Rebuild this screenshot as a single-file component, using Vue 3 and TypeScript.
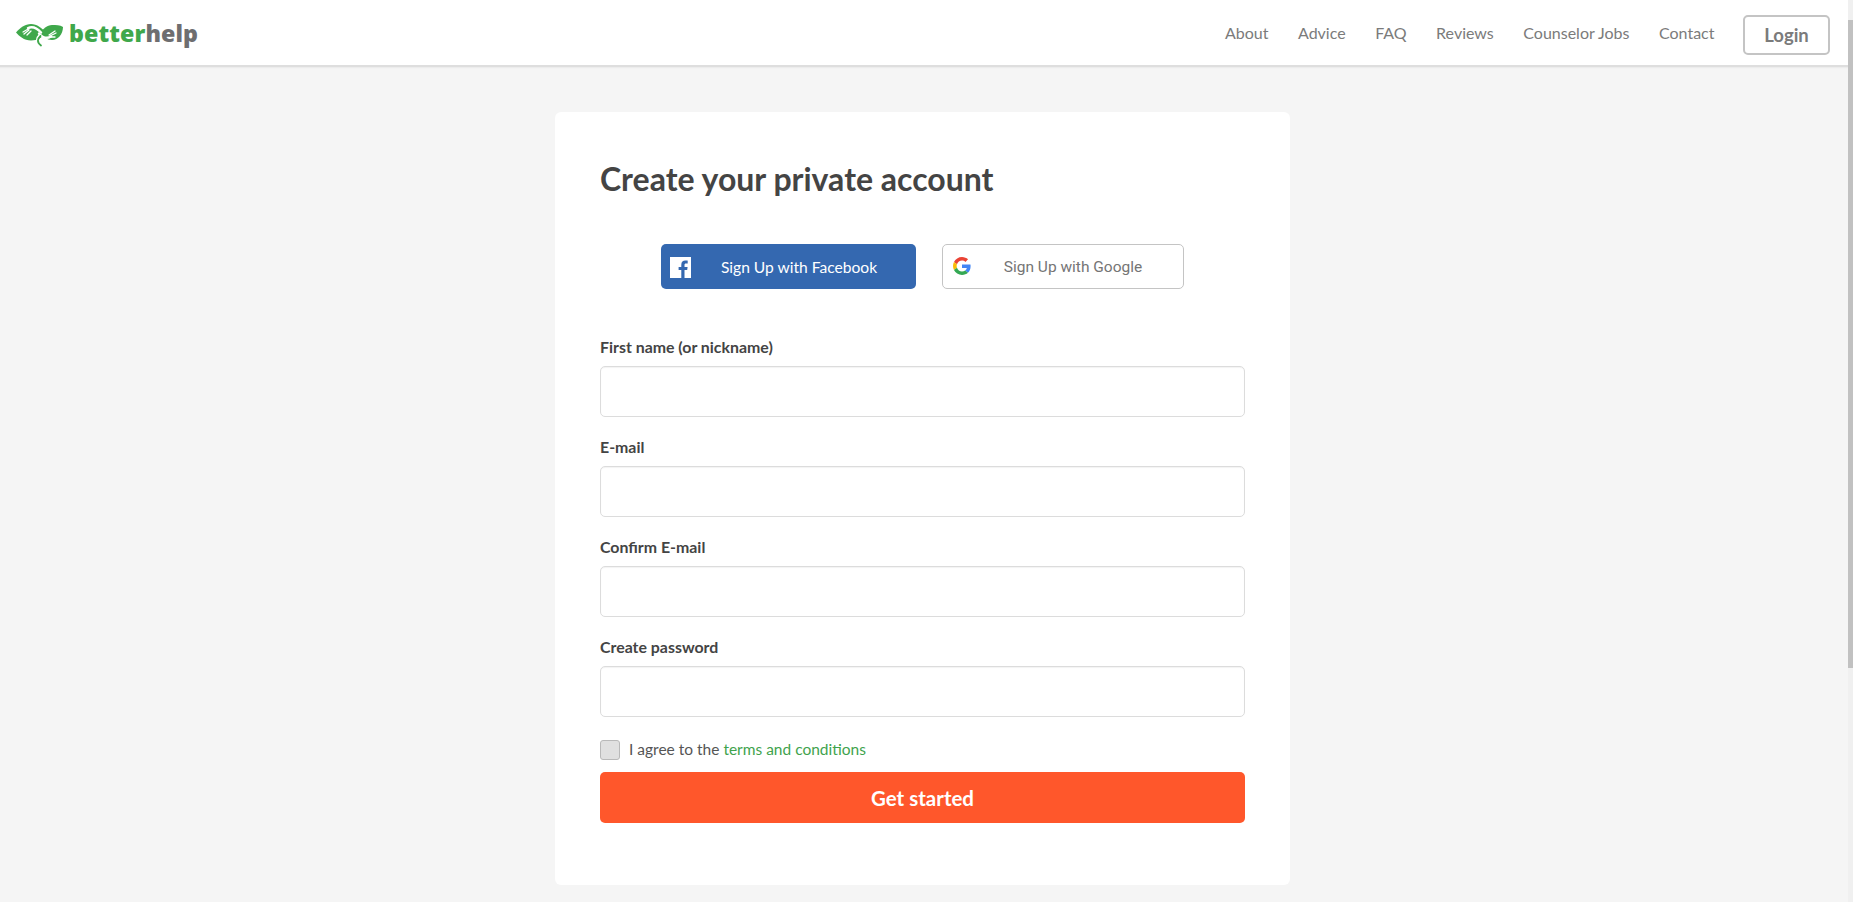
<script setup lang="ts">
const navItems: string[] = ['About', 'Advice', 'FAQ', 'Reviews', 'Counselor Jobs', 'Contact']
const fields: { label: string; type: string }[] = [
  { label: 'First name (or nickname)', type: 'text' },
  { label: 'E-mail', type: 'email' },
  { label: 'Confirm E-mail', type: 'email' },
  { label: 'Create password', type: 'password' },
]
</script>

<template>
  <div class="page">
    <header class="topbar">
      <a class="logo" href="#">
        <svg class="logo-mark" width="48" height="23" viewBox="0 0 48 23">
          <path fill="#3fa84b" d="M0 8.500C4 4 9 0 15 0c6 0 11 4 15 9-4 4-8 7.500-15 7.500C8 16.500 3 12 0 8.500z"/>
          <path fill="#3fa84b" d="M47 3c-3-2-7-2-11-2-5 0-9 4-12 8 3 4 7 7 12 7 6 0 11-6 11-13z"/>
          <g fill="none" stroke="#fff" stroke-linecap="round">
            <path stroke-width="2.400" d="M25 8.500C21 4 17 2 12 4"/>
            <path stroke-width="1.300" d="M13 4.500 7 8M13 6 8 10M15 7l-4 4"/>
            <path stroke-width="2.400" d="M23 9.500c4 4.500 8 5.500 12 3"/>
            <path stroke-width="1.300" d="M33 11l6-4M34 12l6-3M34 13l5 0"/>
          </g>
          <path fill="none" stroke="#fff" stroke-width="3" d="M24 11c-3 3-3.500 6-1 10"/>
          <path fill="none" stroke="#3fa84b" stroke-width="1.800" stroke-linecap="round" d="M24.500 12c-3 3-4 6 .5 9.500"/>
        </svg>
        <span class="logo-text"><span class="logo-green">better</span><span class="logo-gray">help</span></span>
      </a>
      <nav class="nav">
        <a v-for="item in navItems" :key="item" class="nav-link" href="#">{{ item }}</a>
        <button class="login" type="button">Login</button>
      </nav>
    </header>

    <main class="content">
      <section class="card">
        <h1 class="title">Create your private account</h1>
        <div class="social">
          <button class="fb" type="button">
            <svg class="fb-icon" width="21" height="21" viewBox="0 0 21 21">
              <rect width="21" height="21" fill="#fff"/>
              <path fill="#3468b0" d="M14.500 21v-8h2.700l.4-3.100h-3.100V8c0-.9.3-1.500 1.600-1.500h1.600V3.700c-.3 0-1.300-.1-2.400-.1-2.400 0-4 1.400-4 4.100v2.200H8.600V13h2.700v8z"/>
            </svg>
            <span>Sign Up with Facebook</span>
          </button>
          <button class="google" type="button">
            <svg class="g-icon" width="18" height="18" viewBox="0 0 48 48">
              <path fill="#EA4335" d="M24 9.500c3.500 0 6.700 1.200 9.200 3.600l6.900-6.900C35.900 2.400 30.500 0 24 0 14.600 0 6.500 5.400 2.600 13.200l8 6.200C12.500 13.700 17.800 9.500 24 9.500z"/>
              <path fill="#4285F4" d="M46.900 24.500c0-1.600-.1-3.100-.4-4.500H24v9h12.900c-.6 3-2.200 5.500-4.700 7.200l7.700 6c4.500-4.200 7-10.300 7-17.700z"/>
              <path fill="#FBBC05" d="M10.500 28.600c-.5-1.500-.8-3-.8-4.600s.3-3.200.8-4.600l-8-6.200C.9 16.400 0 20.100 0 24s.9 7.600 2.600 10.800z"/>
              <path fill="#34A853" d="M24 48c6.500 0 11.900-2.100 15.900-5.800l-7.700-6c-2.100 1.400-4.900 2.300-8.200 2.300-6.300 0-11.500-4.200-13.400-9.900l-8 6.200C6.500 42.600 14.600 48 24 48z"/>
            </svg>
            <span>Sign Up with Google</span>
          </button>
        </div>
        <form class="form" @submit.prevent>
          <div v-for="field in fields" :key="field.label" class="field">
            <label class="label">{{ field.label }}</label>
            <input class="input" :type="field.type" />
          </div>
          <label class="agree">
            <span class="check"></span>
            <span class="agree-text">I agree to the <a class="terms" href="#">terms and conditions</a></span>
          </label>
          <button class="submit" type="submit">Get started</button>
        </form>
      </section>
    </main>
    <div class="scrollbar"><div class="thumb"></div></div>
  </div>
</template>

<style>
html, body { margin: 0; padding: 0; background: #f5f5f5; overflow: hidden; }
</style>

<style scoped>
.page {
  position: relative;
  height: 902px;
  overflow: hidden;
  background: #f5f5f5;
  font-family: Lato, "Liberation Sans", sans-serif;
  color: #444;
}
.topbar {
  height: 65px;
  box-sizing: content-box;
  background: #fff;
  border-bottom: 2px solid #dedede;
  box-shadow: 0 1px 1px #ececec;
  display: flex;
  align-items: center;
  justify-content: space-between;
  padding: 0 23px 0 16px;
}
.logo { display: flex; align-items: center; gap: 5px; text-decoration: none; }
.logo-mark { display: block; margin-top: 5px; }
.logo-text {
  font-family: "Open Sans", sans-serif;
  font-weight: 800;
  font-size: 23.200px;
  letter-spacing: 0.1px;
  line-height: 30px;
}
.logo-green { color: #3fa84b; }
.logo-gray { color: #6e6e70; }
.nav { display: flex; align-items: center; gap: 29.500px; }
.nav-link { color: #7b7b7b; font-size: 16px; text-decoration: none; }
.login {
  width: 87px;
  height: 40px;
  margin: 4px 0 0 -1px;
  background: #fff;
  border: 2px solid #c4c4c4;
  border-radius: 5px;
  color: #7b7b7b;
  font: 700 18.500px Lato, sans-serif;
}
.content { display: flex; justify-content: center; padding: 45px 8px 0 0; }
.card {
  width: 735px;
  height: 773px;
  box-sizing: border-box;
  background: #fff;
  border-radius: 6px;
  padding: 45px;
}
.title {
  margin: 0;
  font-size: 32px;
  line-height: 44px;
  font-weight: 700;
  color: #444;
}
.social {
  display: flex;
  justify-content: center;
  gap: 26px;
  margin-top: 43px;
}
.fb, .google {
  height: 45px;
  display: flex;
  align-items: center;
  border-radius: 5px;
  box-sizing: border-box;
  position: relative;
  justify-content: center;
  cursor: pointer;
}
.fb {
  width: 255px;
  background: #3468b0;
  border: 0;
  color: #fff;
  font: 400 15.600px Lato, sans-serif;
  padding-left: 27px;
}
.fb-icon { position: absolute; left: 9px; top: 13px; }
.google {
  width: 242px;
  background: #fff;
  border: 1px solid #c4c4c4;
  color: #757575;
  font: 400 15.500px Roboto, sans-serif;
  padding-left: 26px;
}
.g-icon { position: absolute; left: 10px; top: 12px; }
.form { margin-top: 48px; }
.field { margin-bottom: 20px; }
.label {
  display: block;
  font-size: 15.900px;
  font-weight: 700;
  line-height: 20px;
  color: #444;
  margin-bottom: 9px;
}
.input {
  display: block;
  width: 100%;
  height: 51px;
  box-sizing: border-box;
  border: 1px solid #dcdcdc;
  border-radius: 5px;
  box-shadow: inset 0 1px 1px rgba(0, 0, 0, 0.05);
  background: #fff;
  outline: none;
}
.agree {
  display: flex;
  align-items: center;
  gap: 9px;
  font-size: 15.500px;
  color: #555;
  height: 20px;
  margin-top: 23px;
}
.agree-text { padding-bottom: 3px; }
.check {
  width: 20px;
  height: 20px;
  box-sizing: border-box;
  background: #e0e0e0;
  border: 1px solid #b9b9b9;
  border-radius: 3px;
}
.terms { color: #3fa34d; text-decoration: none; }
.submit {
  display: block;
  width: 100%;
  height: 51px;
  margin-top: 12px;
  background: #ff572b;
  border: 0;
  border-radius: 5px;
  color: #fff;
  font: 700 20.500px Lato, sans-serif;
}
.scrollbar {
  position: absolute;
  top: 0;
  right: 0;
  bottom: 0;
  width: 5px;
  background: #f0f0f0;
}
.thumb { margin-top: 20px; height: 648px; background: #c1c1c1; }
</style>
